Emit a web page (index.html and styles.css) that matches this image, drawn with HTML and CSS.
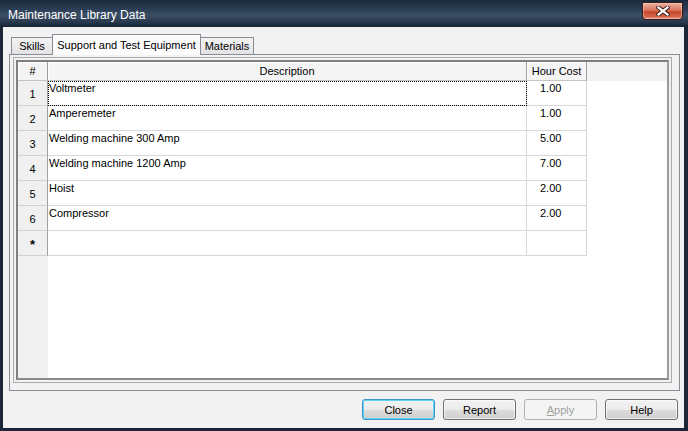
FILE: index.html
```html
<!DOCTYPE html>
<html lang="en">
<head>
    <meta charset="UTF-8">
    <title>Maintenance Library Data</title>
    <link rel="stylesheet" href="styles.css">
</head>
<body>
<div class="window">
    <div class="titlebar">
        <span class="title">Maintenance Library Data</span>
        <button class="close-x" type="button" title="Close">
            <svg width="14" height="10" viewBox="0 0 14 10">
                <path d="M2.5 1.5 L11.5 8.5 M11.5 1.5 L2.5 8.5" stroke="#4b2a22" stroke-width="4.2" stroke-linecap="square"/>
                <path d="M2.5 1.5 L11.5 8.5 M11.5 1.5 L2.5 8.5" stroke="#ffffff" stroke-width="2.2" stroke-linecap="square"/>
            </svg>
        </button>
    </div>
    <div class="frame">
        <div class="client">
            <div class="tabs">
                <div class="tab tab-skills">Skills</div>
                <div class="tab tab-selected">Support and Test Equipment</div>
                <div class="tab tab-materials">Materials</div>
            </div>

            <div class="panel">
                <div class="grid-frame">
                    <div class="grid">
                        <table class="data">
                            <thead>
                                <tr>
                                    <th class="rowhdr">#</th>
                                    <th class="desc">Description</th>
                                    <th class="cost">Hour Cost</th>
                                    <th class="fill"></th>
                                </tr>
                            </thead>
                            <tbody>
                                <tr><td class="rowhdr">1</td><td class="desc focus">Voltmeter</td><td class="cost">1.00</td><td class="fill"></td></tr>
                                <tr><td class="rowhdr">2</td><td class="desc">Amperemeter</td><td class="cost">1.00</td><td class="fill"></td></tr>
                                <tr><td class="rowhdr">3</td><td class="desc">Welding machine 300 Amp</td><td class="cost">5.00</td><td class="fill"></td></tr>
                                <tr><td class="rowhdr">4</td><td class="desc">Welding machine 1200 Amp</td><td class="cost">7.00</td><td class="fill"></td></tr>
                                <tr><td class="rowhdr">5</td><td class="desc">Hoist</td><td class="cost">2.00</td><td class="fill"></td></tr>
                                <tr><td class="rowhdr">6</td><td class="desc">Compressor</td><td class="cost">2.00</td><td class="fill"></td></tr>
                                <tr><td class="rowhdr new">*</td><td class="desc"></td><td class="cost"></td><td class="fill"></td></tr>
                            </tbody>
                        </table>
                    </div>
                </div>
            </div>

            <div class="buttons">
                <button class="btn btn-default" type="button">Close</button>
                <button class="btn" type="button">Report</button>
                <button class="btn" type="button" disabled><u>A</u>pply</button>
                <button class="btn" type="button">Help</button>
            </div>
        </div>
    </div>
</div>
</body>
</html>
```

FILE: styles.css
```css
body { margin: 0; background: #1b2637; font-family: "Liberation Sans", Arial, sans-serif; font-size: 11px; color: #000; }

.window { width: 688px; height: 431px; display: flex; flex-direction: column; }

/* barra del titolo */
.titlebar {
    height: 27px;
    flex: none;
    display: flex;
    align-items: flex-start;
    justify-content: space-between;
    background: linear-gradient(to bottom, #1a283b 0%, #2c3e55 35%, #3b4f67 55%, #2a3b50 80%, #172334 100%);
}
.title { color: #fff; font-size: 12px; line-height: 14px; padding: 8px 0 0 8px; }
.close-x {
    width: 41px;
    height: 18px;
    margin: 2px 5px 0 0;
    padding: 0;
    border: 1px solid #3b1a14;
    border-radius: 0 0 4px 4px;
    background: linear-gradient(to bottom, #e9b2a2 0%, #d9775d 45%, #c7472b 55%, #d4664b 85%, #e7a28e 100%);
    display: flex;
    align-items: center;
    justify-content: center;
    box-shadow: inset 0 0 0 1px rgba(255, 220, 210, 0.45);
}

.frame { flex: 1; display: flex; padding: 0 4px 3px 3px; }
.client { flex: 1; background: #f2f2f2; display: flex; flex-direction: column; }

/* linguette */
.tabs {
    height: 21px;
    margin-top: 7px;
    margin-bottom: -1px;
    padding-left: 8px;
    display: flex;
    align-items: flex-end;
    position: relative;
    z-index: 1;
}
.tab {
    box-sizing: border-box;
    height: 17px;
    margin-bottom: 1px;
    border: 1px solid #898c95;
    border-bottom: none;
    background: linear-gradient(to bottom, #f3f3f3, #e3e3e3);
    display: flex;
    align-items: center;
    justify-content: center;
}
.tab-skills { width: 41px; border-right: none; }
.tab-materials { width: 53px; border-left: none; }
.tab-selected { width: 149px; height: 21px; margin-bottom: 0; background: #fcfcfc; padding-bottom: 1px; }

.panel {
    flex: none;
    box-sizing: border-box;
    height: 337px;
    margin: 0 4px 0 6px;
    padding: 2px 7px 7px 3px;
    border: 1px solid #898c95;
    background: #f2f2f2;
}

/* griglia dati */
.grid-frame { box-sizing: border-box; height: 326px; border: 1px solid #a9a9a9; padding: 2px; }
.grid {
    box-sizing: border-box;
    height: 100%;
    border: 2px solid #7f7f7f;
    border-right-color: #9a9a9a;
    border-bottom-color: #8a8a8a;
    background: linear-gradient(to right, #f0f0f0 0, #f0f0f0 30px, #fff 30px);
    overflow: hidden;
}
.data { width: 100%; table-layout: fixed; border-collapse: separate; border-spacing: 0; }
.data th, .data td { box-sizing: border-box; padding: 0; font-weight: normal; }

.data th {
    height: 19px;
    background: #f4f4f4;
    border-right: 1px solid #a0a0a0;
    border-bottom: 1px solid #c4c4c4;
    box-shadow: inset 1px 1px #fff;
    text-align: center;
    vertical-align: middle;
}
.data th.rowhdr { width: 30px; }
.data th.desc { width: 479px; }
.data th.cost { width: 60px; }
.data th.fill { border: none; box-shadow: none; background: #f2f2f2; }

.data td { height: 25px; border-right: 1px solid #d8d8d8; border-bottom: 1px solid #d8d8d8; background: #fff; }
.data td.rowhdr {
    background: #f0f0f0;
    border-right-color: #a0a0a0;
    border-bottom-color: #d0d0d0;
    text-align: center;
    vertical-align: middle;
    padding-top: 2px;
}
.data td.new { font-size: 13px; font-weight: bold; }
.data td.desc { vertical-align: top; padding: 1px 0 0 1px; }
.data td.cost { vertical-align: top; padding: 1px 0 0 13px; }
.data td.fill { border: none; }
.data td.focus { outline: 1px dotted #000; outline-offset: -1px; }

/* pulsanti */
.buttons { display: flex; justify-content: flex-end; gap: 8px; margin-top: 8px; padding-right: 6px; }
.btn {
    width: 73px;
    height: 21px;
    padding: 0;
    font-family: "Liberation Sans", Arial, sans-serif;
    font-size: 11px;
    color: #000;
    border: 1px solid #707070;
    border-radius: 3px;
    background: linear-gradient(to bottom, #f2f2f2 0%, #ebebeb 50%, #dddddd 51%, #cfcfcf 100%);
    box-shadow: inset 0 0 0 1px rgba(255, 255, 255, 0.6);
}
.btn u { text-decoration: underline; }
.btn-default { border-color: #3c95c8; box-shadow: inset 0 0 0 1px #62d3f7; }
.btn:disabled { color: #a0a0a0; border-color: #adb2b5; background: #f4f4f4; box-shadow: none; }
```
